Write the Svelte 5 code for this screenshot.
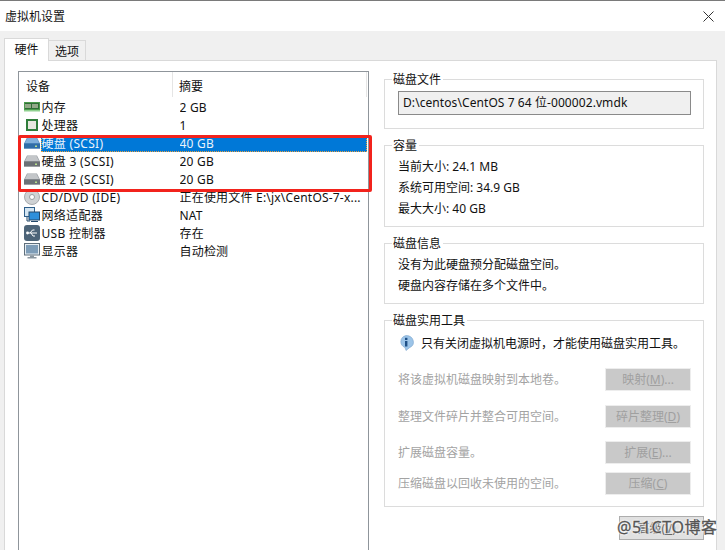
<script lang="ts">
	const devices = [
		{ name: '内存', icon: 'ram', summary: '2 GB' },
		{ name: '处理器', icon: 'cpu', summary: '1' },
		{ name: '硬盘 (SCSI)', icon: 'disk', summary: '40 GB', selected: true },
		{ name: '硬盘 3 (SCSI)', icon: 'disk', summary: '20 GB' },
		{ name: '硬盘 2 (SCSI)', icon: 'disk', summary: '20 GB' },
		{ name: 'CD/DVD (IDE)', icon: 'cd', summary: '正在使用文件 E:\\jx\\CentOS-7-x...' },
		{ name: '网络适配器', icon: 'net', summary: 'NAT' },
		{ name: 'USB 控制器', icon: 'usb', summary: '存在' },
		{ name: '显示器', icon: 'monitor', summary: '自动检测' },
	];

	const tools = [
		{ text: '将该虚拟机磁盘映射到本地卷。', label: '映射', key: 'M', dots: '...' },
		{ text: '整理文件碎片并整合可用空间。', label: '碎片整理', key: 'D', dots: '' },
		{ text: '扩展磁盘容量。', label: '扩展', key: 'E', dots: '...' },
		{ text: '压缩磁盘以回收未使用的空间。', label: '压缩', key: 'C', dots: '' },
	];
</script>

<div class="window">
	<header class="titlebar">
		<span>虚拟机设置</span>
		<svg class="close" width="11" height="11" viewBox="0 0 11 11">
			<path d="M0.5 0.5l10 10M10.5 0.5l-10 10" stroke="#333" fill="none" />
		</svg>
	</header>

	<div class="body">
		<div class="tabs">
			<div class="tab active">硬件</div>
			<div class="tab">选项</div>
		</div>

		<div class="panel">
			<div class="listbox">
				<div class="list-head">
					<div class="col-name">设备</div>
					<div class="col-summary">摘要</div>
				</div>
				{#each devices as d}
					<div class="row">
						<svg class="icon" width="16" height="16" viewBox="0 0 16 16">
							{#if d.icon === 'ram'}
								<rect x="0" y="3" width="16" height="9" fill="#4c9a4c" />
								<rect x="1" y="4" width="14" height="6" fill="#2f6d35" />
								<path d="M2 5v4M4 5v4M6 5v4M9 5v4M11 5v4M13 5v4" stroke="#c9c9b5" stroke-width="1.3" />
								<rect x="0" y="11" width="16" height="1.5" fill="#8fd08f" />
							{:else if d.icon === 'cpu'}
								<rect x="2" y="2" width="12" height="12" fill="#2f7d3a" />
								<rect x="4" y="4" width="8" height="8" fill="#e8e8e0" />
							{:else if d.icon === 'disk'}
								<path d="M3 2.5h10l3 6v5H0v-5z" fill={d.selected ? '#5d92c4' : '#9a9fa4'} />
								<path d="M3.5 3h9l2.5 5H1z" fill={d.selected ? '#7fb0dc' : '#c3c6c9'} />
								<rect x="0" y="8.5" width="16" height="5" fill={d.selected ? '#2f6ea8' : '#6b7075'} />
								<rect x="11" y="10.5" width="2" height="1.5" fill="#b8e08a" />
							{:else if d.icon === 'cd'}
								<circle cx="8" cy="8" r="7.5" fill="#cfd2d4" stroke="#a8abae" />
								<circle cx="8" cy="8" r="2.5" fill="#fff" stroke="#9a9da0" />
							{:else if d.icon === 'net'}
								<rect x="0.5" y="0.5" width="10" height="9" fill="#d5e6f2" stroke="#2f5f8a" />
								<rect x="5" y="5" width="10.5" height="8" fill="#2d8fdb" stroke="#24496b" />
								<path d="M7 14.5h7M3 10v4h3" stroke="#24496b" fill="none" />
							{:else if d.icon === 'usb'}
								<rect x="0" y="0" width="16" height="16" rx="3" fill="#4d6478" />
								<path d="M3 8h10M6 8l2.5-3h2M7 8l2 3h2" stroke="#fff" fill="none" />
								<circle cx="3.5" cy="8" r="1.4" fill="#fff" />
							{:else}
								<rect x="0.5" y="0.5" width="15" height="11.5" fill="#e6edf2" stroke="#5f6f7c" />
								<rect x="2" y="2" width="12" height="8.5" fill="#7e9db8" />
								<path d="M6 12.5h4v1.5h2.5v1.5h-9V14H6z" fill="#8a969f" />
							{/if}
						</svg>
						<div class="row-cells" class:selected={d.selected}>
							<div class="cell-name">{d.name}</div>
							<div class="cell-summary">{d.summary}</div>
						</div>
					</div>
				{/each}
			</div>

			<div class="side">
				<fieldset class="file-group">
					<legend>磁盘文件</legend>
					<div class="path">D:\centos\CentOS 7 64 位-000002.vmdk</div>
				</fieldset>

				<fieldset class="lines">
					<legend>容量</legend>
					<div>当前大小: 24.1 MB</div>
					<div>系统可用空间: 34.9 GB</div>
					<div>最大大小: 40 GB</div>
				</fieldset>

				<fieldset class="lines">
					<legend>磁盘信息</legend>
					<div>没有为此硬盘预分配磁盘空间。</div>
					<div>硬盘内容存储在多个文件中。</div>
				</fieldset>

				<fieldset class="tools">
					<legend>磁盘实用工具</legend>
					<div class="notice">
						<svg width="16" height="16" viewBox="0 0 16 16">
							<path d="M8 0.5a7.5 6.5 0 0 1 3.5 12.2L8 15.5l-1-3A7.5 6.5 0 0 1 8 0.5z" fill="#9cc4e8" stroke="#7aa5cc" stroke-width="0.6" />
							<rect x="7" y="6" width="2.4" height="5.5" fill="#1d4f86" />
							<rect x="7" y="2.8" width="2.4" height="2.2" fill="#1d4f86" />
						</svg>
						<span>只有关闭虚拟机电源时，才能使用磁盘实用工具。</span>
					</div>
					{#each tools as t}
						<div class="tool">
							<span>{t.text}</span>
							<button disabled>{t.label}(<u>{t.key}</u>){t.dots}</button>
						</div>
					{/each}
				</fieldset>

				<div class="advanced">
					<button disabled>高级(<u>V</u>)...</button>
				</div>
			</div>
		</div>
	</div>

	<div class="highlight"></div>
	<div class="watermark">@51CTO博客</div>
</div>

<style>
	:global(body) {
		margin: 0;
		background: #fff;
	}

	.window {
		position: relative;
		width: 725px;
		height: 550px;
		overflow: hidden;
		font-family: "Noto Sans", "Noto Sans CJK SC", sans-serif;
		font-size: 12px;
		color: #111;
		background: #fff;
		box-sizing: border-box;
		border-top: 1px solid #7a7a7a;
	}

	.titlebar {
		height: 30px;
		display: flex;
		align-items: center;
		justify-content: space-between;
		padding: 0 11px 0 5px;
		background: #fff;
	}

	.body {
		height: 519px;
		background: #f0f0f0;
		padding: 7px 8px 0 4px;
		box-sizing: border-box;
	}

	.tabs {
		display: flex;
		align-items: flex-end;
		height: 22px;
	}

	.tab {
		width: 38px;
		height: 20px;
		line-height: 21px;
		text-align: center;
		background: #f0f0f0;
		border: 1px solid #d9d9d9;
		border-bottom: 0;
		box-sizing: border-box;
		margin-left: -1px;
	}

	.tab.active {
		width: 45px;
		height: 23px;
		line-height: 21px;
		background: #fff;
		margin: 0 0 -1px 0;
		position: relative;
	}

	.panel {
		background: #fff;
		border: 1px solid #d9d9d9;
		height: 500px;
		box-sizing: border-box;
		padding: 10px 12px 0 13px;
		display: flex;
		gap: 15px;
	}

	.listbox {
		width: 351px;
		height: 520px;
		flex: none;
		box-sizing: border-box;
		border: 1px solid #8f959b;
		background: #fff;
	}

	.list-head {
		display: flex;
		height: 26px;
		line-height: 29px;
	}

	.col-name {
		width: 154px;
		padding-left: 7px;
		box-sizing: border-box;
		height: 25px;
		border-right: 1px solid #e5e5e5;
	}

	.col-summary {
		flex: 1;
		padding-left: 6px;
		border-right: 1px solid #e5e5e5;
		height: 25px;
		margin-right: 1px;
	}

	.row {
		display: flex;
		align-items: center;
		height: 18px;
		padding-left: 5px;
	}

	.icon {
		flex: none;
		width: 16px;
		height: 16px;
	}

	.row-cells {
		display: flex;
		flex: 1;
		height: 17px;
		line-height: 17px;
		margin-left: 0.5px;
		margin-right: 1px;
		white-space: nowrap;
	}

	.row-cells.selected {
		background: #0078d7;
		color: #e8f2fb;
		outline: 1px dotted #e8a040;
		outline-offset: -1px;
	}

	.cell-name {
		width: 139px;
		padding-left: 1px;
		letter-spacing: 0.3px;
		box-sizing: border-box;
	}

	.cell-summary {
		flex: 1;
		letter-spacing: 0.2px;
		overflow: hidden;
	}

	.side {
		width: 320px;
		flex: none;
		display: flex;
		flex-direction: column;
	}

	fieldset {
		margin: 0 0 8px;
		padding: 0 13px;
		border: 1px solid #dcdcdc;
		min-width: 0;
	}

	legend {
		padding: 0 2px 0 1px;
		margin-left: -6px;
		height: 17px;
		line-height: 17px;
	}

	.file-group {
		height: 58px;
		box-sizing: border-box;
	}

	.path {
		height: 24px;
		line-height: 22px;
		width: 293px;
		margin-top: 3px;
		box-sizing: border-box;
		border: 1px solid #8a8a8a;
		background: #f0f0f0;
		padding-left: 4px;
		letter-spacing: 0.08px;
		white-space: nowrap;
	}

	.lines {
		padding-top: 2px;
		padding-bottom: 7px;
	}

	.lines div {
		height: 21px;
		line-height: 21px;
	}

	.tools {
		height: 195px;
		box-sizing: border-box;
		padding-top: 2px;
		margin-bottom: 9px;
	}

	.notice {
		display: flex;
		align-items: center;
		gap: 7px;
		height: 24px;
	}

	.tool {
		display: flex;
		align-items: center;
		justify-content: space-between;
		height: 24px;
		margin-top: 12px;
		color: #a3a3a3;
		width: 293px;
	}

	.tool:nth-child(4) {
		margin-top: 13px;
	}

	.tool:last-child {
		margin-top: 7px;
	}

	.tool button {
		width: 86px;
		height: 23px;
	}

	button {
		padding: 0;
		font: inherit;
		color: #a0a0a0;
		background: #c9c9c9;
		border: 1px solid #ededed;
		outline: 0;
	}

	.advanced {
		display: flex;
		justify-content: flex-end;
	}

	.advanced button {
		width: 85px;
		height: 24px;
		background: #e1e1e1;
		border-color: #adadad;
		color: #666;
	}

	.highlight {
		position: absolute;
		left: 18px;
		top: 134px;
		width: 354px;
		height: 57px;
		border: 3px solid #f2231c;
		border-radius: 2px;
		box-sizing: border-box;
	}

	.watermark {
		position: absolute;
		left: 617px;
		top: 513px;
		font-size: 16px;
		color: #555;
		-webkit-text-stroke: 0.3px #555;
		text-shadow: 0 0 2px #fff, 0 0 2px #fff, 0 0 3px #fff;
		white-space: nowrap;
		letter-spacing: 0.6px;
	}
</style>
